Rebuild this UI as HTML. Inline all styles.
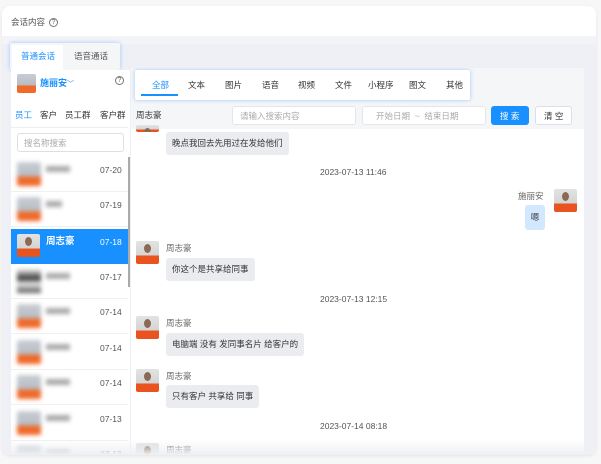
<!DOCTYPE html>
<html><head><meta charset="utf-8"><style>
*{margin:0;padding:0;box-sizing:border-box}
body{width:601px;height:464px;background:#f7f7f8;font-family:"Liberation Sans","Noto Sans CJK SC",sans-serif;position:relative;overflow:hidden;color:#333}
.a{position:absolute}
.card{left:2px;top:6px;width:594px;height:449px;background:#eef0f5;border-radius:8px;overflow:hidden;box-shadow:0 1px 3px rgba(0,0,0,.08)}
.hdr{left:2px;top:6px;width:594px;height:30px;background:#fff;border-radius:8px 8px 0 0}
.t{font-size:8.5px;white-space:nowrap;line-height:12px}
.av{width:24px;height:24px;border-radius:2px;background:linear-gradient(#c9cdd3 0,#b7bcc4 60%,#f06a2a 60%,#f06a2a 100%)}
.avc{width:23px;height:23px;border-radius:2px;background:linear-gradient(#e3e3e3 0,#d4d4d4 62%,#e8531f 62%)}
.avc:after{content:"";position:absolute;left:8px;top:3px;width:7px;height:9px;border-radius:50%;background:#8a6a55}
.bub{background:#ebecf0;border-radius:3px;font-size:8.5px;padding:0 6px;line-height:23px;height:23px;white-space:nowrap}
.li{left:0;width:117px;height:35px;background:#fff;border-bottom:1px solid #f0f0f0}
.blur{filter:blur(2px)}
.q{width:9px;height:9px;border:1px solid #777;border-radius:50%;font-size:7px;line-height:7px;text-align:center;color:#666}
</style></head><body>
<div class="a card"></div>
<div class="a hdr"></div>
<div class="a t" style="left:11px;top:16px;color:#555">会话内容</div>
<div class="a q" style="left:49px;top:18px">?</div>
<div class="a" style="left:2px;top:36px;width:594px;height:8px;background:#f3f4f7"></div>
<!-- tabs -->
<div class="a" style="left:10px;top:43px;width:110px;height:27px;background:#f5f6f8;box-shadow:0 0 4px #9fc3ff;border-radius:2px"></div>
<div class="a" style="left:12px;top:45px;width:51px;height:25px;background:#fff"></div>
<div class="a t" style="left:21px;top:50px;color:#1890ff">普通会话</div>
<div class="a t" style="left:74px;top:50px;color:#555">语音通话</div>
<!-- left panel -->
<div class="a" style="left:11px;top:70px;width:119px;height:385px;background:#fff"></div>
<div class="a av" style="left:17px;top:74px;width:19px;height:19px"></div>
<div class="a t" style="left:40px;top:77px;color:#1890ff;font-weight:bold;font-size:9px">施丽安<span style="font-weight:normal;font-size:7px">﹀</span></div>
<div class="a q" style="left:115px;top:76px">?</div>
<div class="a t" style="left:15px;top:109px;color:#1890ff">员工</div>
<div class="a t" style="left:40px;top:109px">客户</div>
<div class="a t" style="left:65px;top:109px">员工群</div>
<div class="a t" style="left:100px;top:109px">客户群</div>
<div class="a" style="left:11px;top:127px;width:117px;height:1px;background:#eee"></div>
<div class="a" style="left:17px;top:133px;width:107px;height:19px;border:1px solid #dcdfe6;border-radius:3px"></div>
<div class="a t" style="left:24px;top:137px;color:#aaa">搜名称搜索</div>
<div class="a" style="left:11px;top:157px;width:117px;height:298px;overflow:hidden">
<div class="a li" style="top:0"></div><div class="a av blur" style="left:6px;top:5px"></div><div class="a blur" style="left:35px;top:9px;width:24px;height:6px;background:#aaa"></div><div class="a t" style="left:89px;top:7px;color:#555">07-20</div>
<div class="a li" style="top:35px"></div><div class="a av blur" style="left:6px;top:40px"></div><div class="a blur" style="left:35px;top:44px;width:16px;height:6px;background:#aaa"></div><div class="a t" style="left:89px;top:42px;color:#555">07-19</div>
<div class="a" style="left:0;top:72px;width:117px;height:35px;background:#1890ff"></div><div class="a avc" style="left:6px;top:77px"></div><div class="a t" style="left:35px;top:79px;color:#fff;font-weight:bold;font-size:9.5px">周志豪</div><div class="a t" style="left:89px;top:79px;color:#fff">07-18</div>
<div class="a li" style="top:107px"></div><div class="a blur" style="left:6px;top:112px;width:24px;height:24px;background:linear-gradient(#eee 0,#333 40%,#eee 60%,#555 100%)"></div><div class="a blur" style="left:35px;top:116px;width:24px;height:6px;background:#aaa"></div><div class="a t" style="left:89px;top:114px;color:#555">07-17</div>
<div class="a li" style="top:142px"></div><div class="a av blur" style="left:6px;top:147px"></div><div class="a blur" style="left:35px;top:151px;width:24px;height:6px;background:#aaa"></div><div class="a t" style="left:89px;top:149px;color:#555">07-14</div>
<div class="a li" style="top:178px"></div><div class="a av blur" style="left:6px;top:183px"></div><div class="a blur" style="left:35px;top:187px;width:24px;height:6px;background:#aaa"></div><div class="a t" style="left:89px;top:185px;color:#555">07-14</div>
<div class="a li" style="top:213px"></div><div class="a av blur" style="left:6px;top:218px"></div><div class="a blur" style="left:35px;top:222px;width:24px;height:6px;background:#aaa"></div><div class="a t" style="left:89px;top:220px;color:#555">07-14</div>
<div class="a li" style="top:249px"></div><div class="a av blur" style="left:6px;top:254px"></div><div class="a blur" style="left:35px;top:258px;width:24px;height:6px;background:#aaa"></div><div class="a t" style="left:89px;top:256px;color:#555">07-13</div>
<div class="a li" style="top:284px"></div><div class="a av blur" style="left:6px;top:289px"></div><div class="a blur" style="left:35px;top:293px;width:24px;height:6px;background:#aaa"></div><div class="a t" style="left:89px;top:291px;color:#555">07-13</div>
</div>
<div class="a" style="left:128px;top:157px;width:2px;height:130px;background:#aaa"></div>
<!-- right panel -->
<div class="a" style="left:131px;top:68px;width:453px;height:387px;background:#fff;overflow:hidden">
<div class="a" style="left:0;top:0;width:453px;height:61px;background:#f5f6f8"></div>
<div class="a" style="left:4px;top:2px;width:335px;height:30px;background:#fff;box-shadow:0 0 4px #9fc3ff;border-radius:2px"></div>
<div class="a" style="left:10px;top:26px;width:37px;height:2px;background:#1890ff"></div>
<div class="a t" style="left:21px;top:11px;color:#1890ff">全部</div>
<div class="a t" style="left:57px;top:11px">文本</div>
<div class="a t" style="left:94px;top:11px">图片</div>
<div class="a t" style="left:131px;top:11px">语音</div>
<div class="a t" style="left:167px;top:11px">视频</div>
<div class="a t" style="left:204px;top:11px">文件</div>
<div class="a t" style="left:237px;top:11px">小程序</div>
<div class="a t" style="left:278px;top:11px">图文</div>
<div class="a t" style="left:315px;top:11px">其他</div>
<div class="a t" style="left:5px;top:41px">周志豪</div>
<div class="a" style="left:101px;top:38px;width:124px;height:19px;background:#fff;border:1px solid #e4e6eb;border-radius:3px"></div>
<div class="a t" style="left:109px;top:42px;color:#aaa">请输入搜索内容</div>
<div class="a" style="left:231px;top:38px;width:124px;height:19px;background:#fff;border:1px solid #e4e6eb;border-radius:3px"></div>
<div class="a t" style="left:245px;top:42px;color:#aaa">开始日期 &nbsp;~ &nbsp;结束日期</div>
<div class="a" style="left:360px;top:38px;width:38px;height:19px;background:#1890ff;border-radius:3px"></div>
<div class="a t" style="left:369px;top:42px;color:#fff">搜 索</div>
<div class="a" style="left:404px;top:38px;width:37px;height:19px;background:#fff;border:1px solid #dcdfe6;border-radius:3px"></div>
<div class="a t" style="left:413px;top:42px">清 空</div>
<div class="a avc" style="left:5px;top:57px;height:7px;overflow:hidden"></div>
<div class="a bub" style="left:35px;top:64px">晚点我回去先用过在发给他们</div>
<div class="a t" style="left:189px;top:98px;color:#555">2023-07-13 11:46</div>
<div class="a t" style="left:387px;top:122px;color:#666">施丽安</div>
<div class="a avc" style="left:423px;top:121px"></div>
<div class="a" style="left:394px;top:137px;width:20px;height:25px;background:#d1e8ff;border-radius:3px;font-size:8.5px;line-height:25px;text-align:center">嗯</div>
<div class="a avc" style="left:5px;top:173px"></div>
<div class="a t" style="left:35px;top:174px;color:#666">周志豪</div>
<div class="a bub" style="left:35px;top:190px">你这个是共享给同事</div>
<div class="a t" style="left:189px;top:225px;color:#555">2023-07-13 12:15</div>
<div class="a avc" style="left:5px;top:248px"></div>
<div class="a t" style="left:35px;top:249px;color:#666">周志豪</div>
<div class="a bub" style="left:35px;top:265px">电脑端 没有 发同事名片 给客户的</div>
<div class="a avc" style="left:5px;top:301px"></div>
<div class="a t" style="left:35px;top:302px;color:#666">周志豪</div>
<div class="a bub" style="left:35px;top:317px">只有客户 共享给 同事</div>
<div class="a t" style="left:189px;top:352px;color:#555">2023-07-14 08:18</div>
<div class="a avc" style="left:5px;top:375px"></div>
<div class="a t" style="left:35px;top:376px;color:#666">周志豪</div>
</div>
<div class="a" style="left:2px;top:440px;width:594px;height:15px;background:linear-gradient(rgba(240,241,245,0),#eef0f5)"></div>
</body></html>
